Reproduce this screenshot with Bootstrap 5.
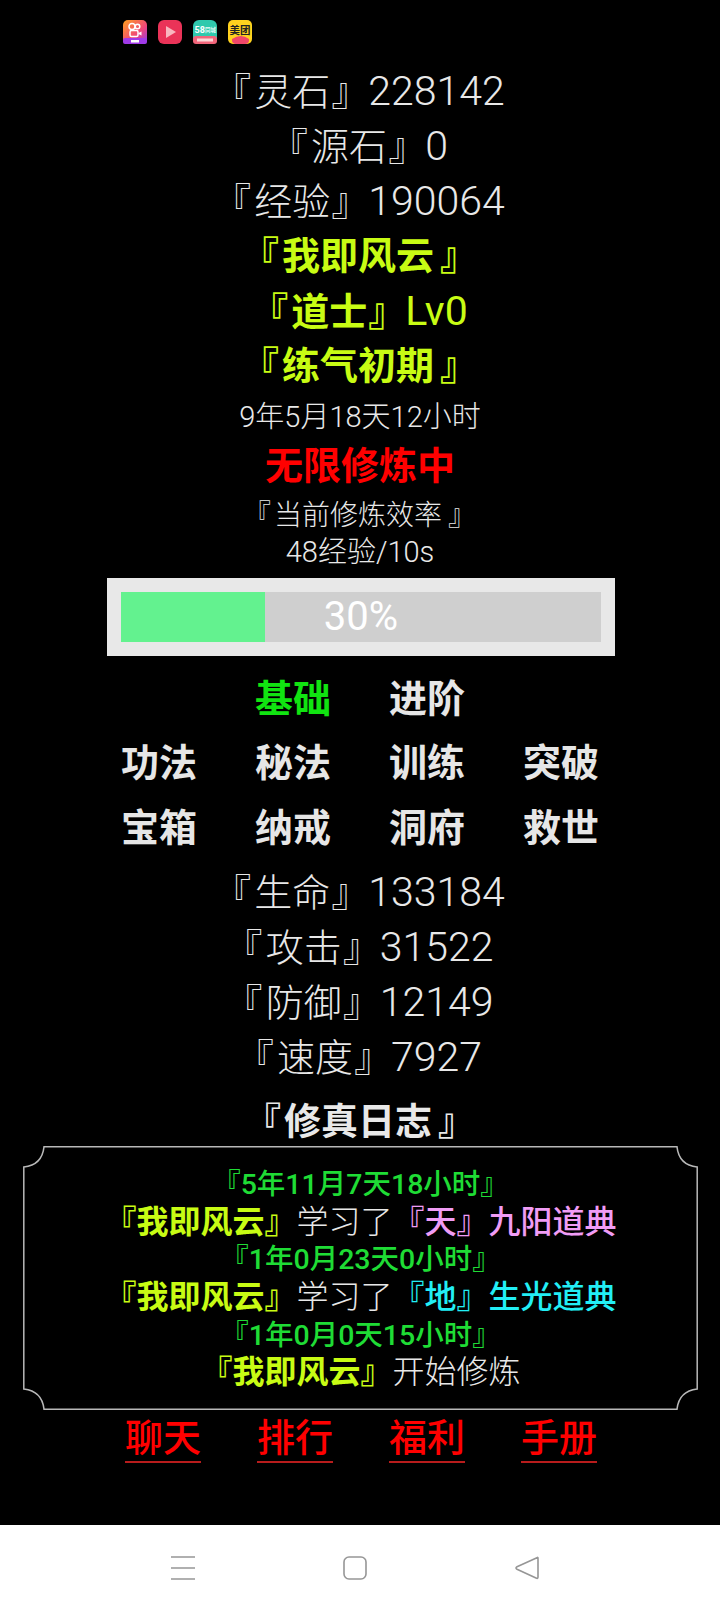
<!DOCTYPE html>
<html lang="zh">
<head>
    <meta charset="UTF-8">
    <meta name="viewport" content="width=device-width, initial-scale=1.0">
    <title>修真日志</title>
    <link rel="stylesheet" href="https://cdn.jsdelivr.net/npm/bootstrap@5.3.0/dist/css/bootstrap.min.css">
    <style>
        html, body { height: 100%; }
        body {
            background: #000;
            color: #e8e8e8;
            font-family: Roboto, "Noto Sans CJK SC", sans-serif;
            font-weight: 300;
        }
        .game-page { height: 1525px; overflow: hidden; }
        .app-icons { height: 63.5px; padding: 20px 0 0 123px; gap: 11px; }
        .app-icons svg { width: 24px; height: 24px; }
        .stat-line { height: 55px; line-height: 55px; font-size: 38px; }
        .stat-num { font-size: 41px; }
        .bl { margin: 0 3px 0 -2px; }
        .br { margin: 0 -1px 0 1px; }
        .solo .br { margin-left: 6px; }
        .strong-line { font-weight: 700; color: #c8fc14; }
        .time-line { height: 47px; line-height: 47px; font-size: 29px; }
        .train-line { height: 50px; line-height: 50px; font-size: 38px; font-weight: 700; color: #f00; }
        .rate-line { height: 36px; line-height: 36px; font-size: 29px; }
        .rate-first { margin-top: 7px; font-size: 28px; }
        .bar-frame { width: 508px; height: 78px; margin: 8px 0 9px 107px; padding: 14px; background: #e8e8e8; }
        .bar-track { height: 50px; border-radius: 0; background: #cfcfcf; }
        .bar-fill { background: #63f28f; }
        .bar-label { inset: 0; line-height: 50px; font-size: 40px; font-weight: 400; color: #fff; }
        .menu-grid { width: 536px; margin-left: 92px; }
        .menu-item { height: 64.5px; line-height: 68px; font-size: 38px; font-weight: 700; color: #e6e6e6; }
        .menu-on { color: #11e411; }
        .stats-block { margin-top: 7px; }
        .log-title { height: 57px; padding-top: 4px; line-height: 59px; font-size: 37px; font-weight: 700; margin-top: 4px; }
        .log-box { width: 675px; height: 264px; margin-left: 23px; padding-top: 20px; }
        .log-frame { inset: 0; width: 100%; height: 100%; }
        .log-line { height: 37.7px; line-height: 37.7px; font-size: 32px; white-space: nowrap; position: relative; }
        .log-time { font-size: 28.5px; font-weight: 500; color: #1fdc35; }
        .log-name { font-weight: 700; color: #c8fc14; }
        .log-pink { font-weight: 500; color: #f09cf5; }
        .log-cyan { font-weight: 500; color: #22eef5; }
        .foot-links { padding-left: 125px; gap: 56px; margin-top: 1px; }
        .foot-link { width: 76px; height: 52px; line-height: 54px; font-size: 38px; font-weight: 500; color: #f00; border-bottom: 2px solid #b81c1c; text-decoration: none; white-space: nowrap; }
        .sys-nav { height: 87px; background: #fff; padding: 31px 0 0 171px; gap: 148px; }
        .sys-nav svg { width: 24px; height: 24px; }
    </style>
</head>

<body>
    <div class="game-page">
        <div class="app-icons d-flex">
            <svg viewBox="0 0 24 24"><defs><linearGradient id="ks" x1="0" y1="0" x2="1" y2="1"><stop offset="0" stop-color="#ffa21e"/><stop offset=".6" stop-color="#f0457a"/><stop offset="1" stop-color="#8a3cf0"/></linearGradient></defs><rect width="24" height="24" rx="5" fill="url(#ks)"/><rect y="18" width="24" height="6" rx="2" fill="#a03ae8"/><circle cx="9" cy="6.500" r="3" fill="none" stroke="#fff" stroke-width="1.500"/><circle cx="14.500" cy="6.500" r="2.300" fill="none" stroke="#fff" stroke-width="1.500"/><rect x="7" y="10.500" width="8" height="6" rx="1.500" fill="none" stroke="#fff" stroke-width="1.500"/><path d="M15.500 13l3-1.500v4l-3-1.500z" fill="#fff"/><rect x="8" y="20" width="8" height="2.500" fill="#fff"/></svg>
            <svg viewBox="0 0 24 24"><rect width="24" height="24" rx="6" fill="#ea3358"/><path d="M8 6l10 6-10 6z" fill="#f9b7bf"/></svg>
            <svg viewBox="0 0 24 24"><rect width="24" height="24" rx="6" fill="#2fc9ad"/><rect y="16" width="24" height="8" rx="3" fill="#f2657a"/><rect x="4" y="18.500" width="16" height="3" fill="#fbd7d7"/><text x="1.500" y="13" font-size="9" font-weight="700" fill="#fff" font-family="Roboto, sans-serif">58</text><text x="12" y="12" font-size="5.500" font-weight="700" fill="#e4fbf5" font-family="'Noto Sans CJK SC', sans-serif">同城</text></svg>
            <svg viewBox="0 0 24 24"><rect width="24" height="24" rx="5" fill="#ffd21e"/><path d="M4 19q9-6 17 0v1q0 4-4 4H8q-4 0-4-4z" fill="#f0476a"/><text x="1.500" y="14" font-size="10.500" font-weight="700" fill="#222" font-family="'Noto Sans CJK SC', sans-serif">美团</text></svg>
        </div>

        <div class="stat-line text-center"><span class="bl">『</span>灵石<span class="br">』</span><span class="stat-num">228142</span></div>
        <div class="stat-line text-center"><span class="bl">『</span>源石<span class="br">』</span><span class="stat-num">0</span></div>
        <div class="stat-line text-center"><span class="bl">『</span>经验<span class="br">』</span><span class="stat-num">190064</span></div>
        <div class="stat-line solo strong-line text-center"><span class="bl">『</span>我即风云<span class="br">』</span></div>
        <div class="stat-line text-center strong-line"><span class="fw-bold"><span class="bl">『</span>道士<span class="br">』</span></span><span class="stat-num fw-normal">Lv0</span></div>
        <div class="stat-line solo strong-line text-center"><span class="bl">『</span>练气初期<span class="br">』</span></div>
        <div class="time-line text-center">9年5月18天12小时</div>
        <div class="train-line text-center">无限修炼中</div>
        <div class="rate-line rate-first solo text-center"><span class="bl">『</span>当前修炼效率<span class="br">』</span></div>
        <div class="rate-line text-center">48经验/10s</div>

        <div class="bar-frame">
            <div class="progress bar-track position-relative">
                <div class="progress-bar bar-fill" style="width: 30%"></div>
                <div class="bar-label position-absolute text-center">30%</div>
            </div>
        </div>

        <div class="row g-0 menu-grid text-center">
            <div class="col-3 menu-item"></div>
            <div class="col-3 menu-item menu-on">基础</div>
            <div class="col-3 menu-item">进阶</div>
            <div class="col-3 menu-item"></div>
            <div class="col-3 menu-item">功法</div>
            <div class="col-3 menu-item">秘法</div>
            <div class="col-3 menu-item">训练</div>
            <div class="col-3 menu-item">突破</div>
            <div class="col-3 menu-item">宝箱</div>
            <div class="col-3 menu-item">纳戒</div>
            <div class="col-3 menu-item">洞府</div>
            <div class="col-3 menu-item">救世</div>
        </div>

        <div class="stats-block">
            <div class="stat-line text-center"><span class="bl">『</span>生命<span class="br">』</span><span class="stat-num">133184</span></div>
            <div class="stat-line text-center"><span class="bl">『</span>攻击<span class="br">』</span><span class="stat-num">31522</span></div>
            <div class="stat-line text-center"><span class="bl">『</span>防御<span class="br">』</span><span class="stat-num">12149</span></div>
            <div class="stat-line text-center"><span class="bl">『</span>速度<span class="br">』</span><span class="stat-num">7927</span></div>
        </div>

        <div class="log-title solo text-center"><span class="bl">『</span>修真日志<span class="br">』</span></div>

        <div class="log-box position-relative">
            <svg class="log-frame position-absolute" viewBox="0 0 675 264" fill="none" stroke="#b8b8b8" stroke-width="1.500">
                <path d="M21 .8H654Q656 19 674.200 21V243Q656 245 654 263.200H21Q19 245 .8 243V21Q19 19 21 .8Z"/>
            </svg>
            <div class="log-line log-time text-center">『5年11月7天18小时』</div>
            <div class="log-line text-center"><span class="log-name">『我即风云』</span>学习了<span class="log-pink">『天』九阳道典</span></div>
            <div class="log-line log-time text-center">『1年0月23天0小时』</div>
            <div class="log-line text-center"><span class="log-name">『我即风云』</span>学习了<span class="log-cyan">『地』生光道典</span></div>
            <div class="log-line log-time text-center">『1年0月0天15小时』</div>
            <div class="log-line text-center"><span class="log-name">『我即风云』</span>开始修炼</div>
        </div>

        <div class="foot-links d-flex">
            <a class="foot-link text-center" href="#">聊天</a>
            <a class="foot-link text-center" href="#">排行</a>
            <a class="foot-link text-center" href="#">福利</a>
            <a class="foot-link text-center" href="#">手册</a>
        </div>
    </div>

    <div class="sys-nav d-flex">
        <svg viewBox="0 0 24 24" fill="none" stroke="#969696" stroke-width="1.600"><path d="M0 1h24M0 12h24M0 23h24"/></svg>
        <svg viewBox="0 0 24 24" fill="none" stroke="#969696" stroke-width="1.600"><rect x="1" y="1" width="22" height="22" rx="5"/></svg>
        <svg viewBox="0 0 24 24" fill="none" stroke="#969696" stroke-width="1.600" stroke-linejoin="round"><path d="M22.500 1.500Q23 1 23 3V21Q23 23 21 22L2 13.200Q0 12 2 10.800Z"/></svg>
    </div>

    <script src="https://cdn.jsdelivr.net/npm/bootstrap@5.3.0/dist/js/bootstrap.bundle.min.js"></script>
</body>
</html>
